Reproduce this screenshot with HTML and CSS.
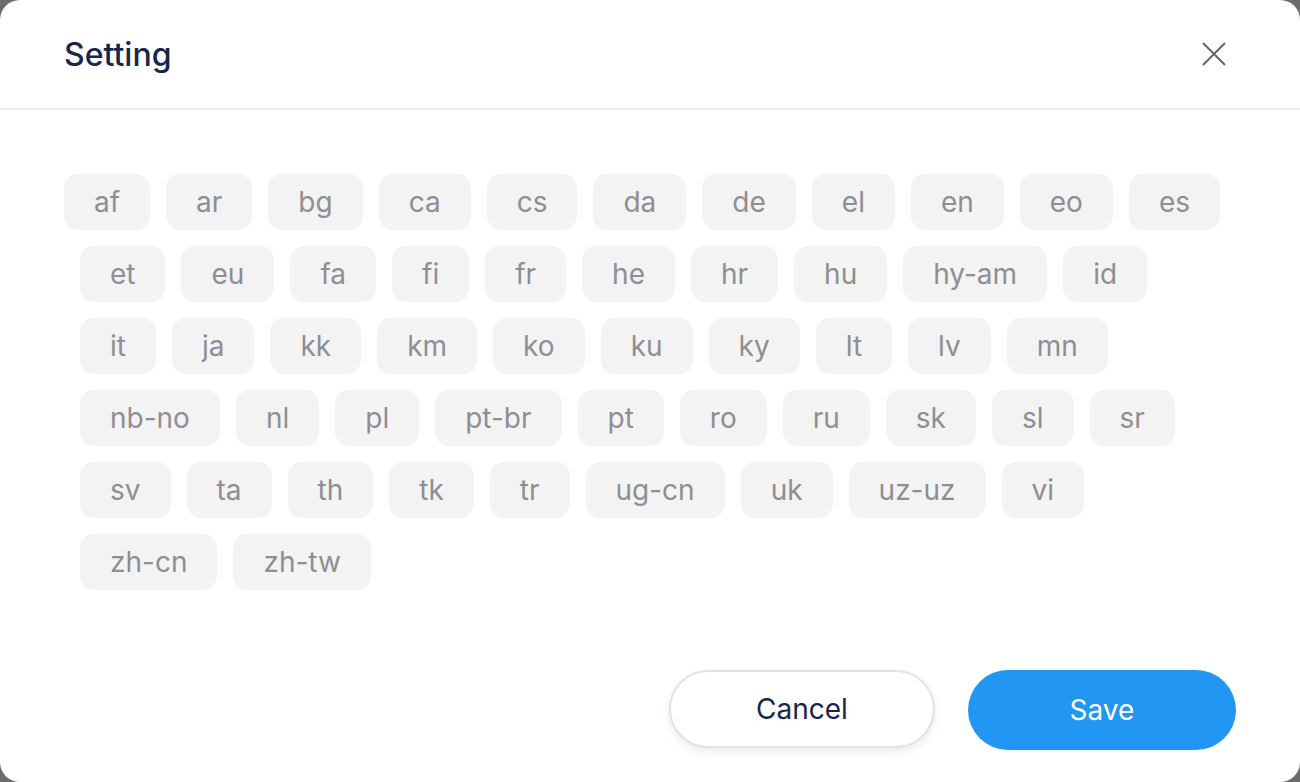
FILE: index.html
```html
<!DOCTYPE html>
<html>
<head>
<meta charset="utf-8">
<link rel="stylesheet" href="styles.css">
</head>
<body>
<div class="modal">
  <div class="header">
    <h1 class="title">Setting</h1>
    <button class="close" aria-label="Close">
      <svg width="24" height="24" viewBox="0 0 24 24"><path d="M1 1L23 23M23 1L1 23" stroke="#666" stroke-width="2" fill="none"/></svg>
    </button>
  </div>
  <div class="content">
    <div class="row first">
      <span class="tag">af</span><span class="tag">ar</span><span class="tag">bg</span><span class="tag">ca</span><span class="tag">cs</span><span class="tag">da</span><span class="tag">de</span><span class="tag">el</span><span class="tag">en</span><span class="tag">eo</span><span class="tag">es</span>
    </div>
    <div class="row">
      <span class="tag">et</span><span class="tag">eu</span><span class="tag">fa</span><span class="tag">fi</span><span class="tag">fr</span><span class="tag">he</span><span class="tag">hr</span><span class="tag">hu</span><span class="tag">hy-am</span><span class="tag">id</span>
    </div>
    <div class="row">
      <span class="tag">it</span><span class="tag">ja</span><span class="tag">kk</span><span class="tag">km</span><span class="tag">ko</span><span class="tag">ku</span><span class="tag">ky</span><span class="tag">lt</span><span class="tag">lv</span><span class="tag">mn</span>
    </div>
    <div class="row">
      <span class="tag">nb-no</span><span class="tag">nl</span><span class="tag">pl</span><span class="tag">pt-br</span><span class="tag">pt</span><span class="tag">ro</span><span class="tag">ru</span><span class="tag">sk</span><span class="tag">sl</span><span class="tag">sr</span>
    </div>
    <div class="row">
      <span class="tag">sv</span><span class="tag">ta</span><span class="tag">th</span><span class="tag">tk</span><span class="tag">tr</span><span class="tag">ug-cn</span><span class="tag">uk</span><span class="tag">uz-uz</span><span class="tag">vi</span>
    </div>
    <div class="row">
      <span class="tag">zh-cn</span><span class="tag">zh-tw</span>
    </div>
  </div>
  <div class="footer">
    <button class="btn cancel">Cancel</button>
    <button class="btn save">Save</button>
  </div>
</div>
</body>
</html>
```

FILE: styles.css
```css
* { box-sizing: border-box; }
html, body { margin: 0; padding: 0; }
body {
  background: #6b6b6b;
  width: 1300px;
  height: 782px;
  font-family: "Inter", "Noto Sans", sans-serif;
  overflow: hidden;
}
.modal {
  width: 1300px;
  height: 782px;
  background: #fff;
  border-radius: 20px;
  display: flex;
  flex-direction: column;
}
.header {
  height: 110px;
  border-bottom: 2px solid #e9eef4;
  display: flex;
  align-items: center;
  justify-content: space-between;
  padding: 0 74px 0 64px;
}
.title {
  margin: 0;
  font-size: 32px;
  font-weight: 500;
  color: #17264a;
}
.close {
  border: 0;
  background: none;
  padding: 0;
  width: 24px;
  height: 24px;
  display: flex;
}
.content {
  padding: 64px 64px 0 80px;
  display: flex;
  flex-direction: column;
  gap: 16px;
}
.row {
  display: flex;
  gap: 16px;
}
.row.first { margin-left: -16px; }
.tag {
  height: 56px;
  padding: 0 30px;
  background: #f3f3f4;
  border-radius: 14px;
  color: #8e8e93;
  font-size: 28px;
  display: flex;
  align-items: center;
  justify-content: center;
}
.footer {
  margin-top: auto;
  display: flex;
  justify-content: flex-end;
  align-items: flex-start;
  gap: 33px;
  padding: 0 64px 32px 0;
}
.btn {
  height: 80px;
  border-radius: 40px;
  font-family: "Inter", "Noto Sans", sans-serif;
  font-size: 28px;
  padding: 0;
}
.cancel {
  width: 266px;
  height: 78px;
  background: #fff;
  border: 2px solid #dfe2e8;
  color: #17264a;
  box-shadow: 0 4px 10px rgba(0,0,0,0.08);
}
.save {
  width: 268px;
  background: #2196f3;
  border: 0;
  color: #fff;
}
```
